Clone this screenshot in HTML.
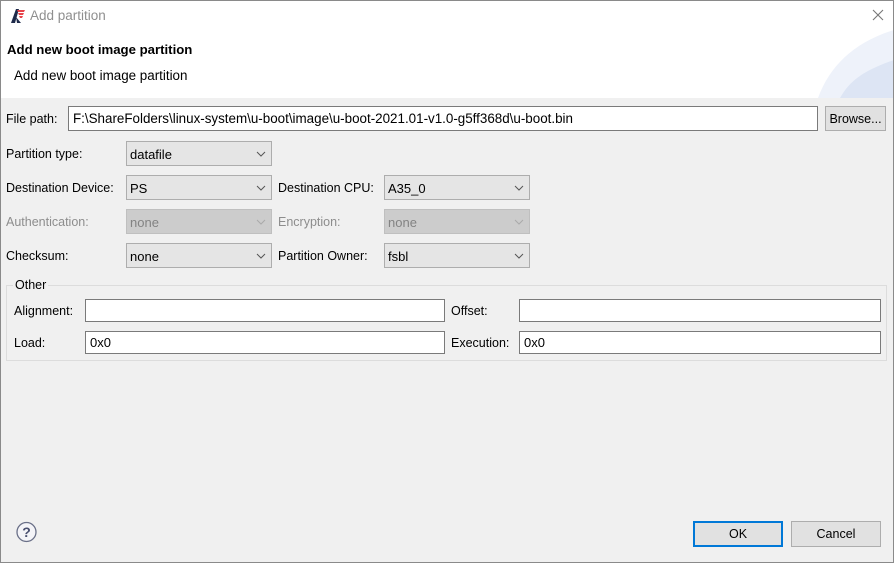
<!DOCTYPE html>
<html><head><style>
*{box-sizing:border-box;margin:0;padding:0}
body{width:894px;height:563px;overflow:hidden;background:#f0f0f0;font-family:"Liberation Sans",sans-serif;font-size:12.5px;color:#000;position:relative}
.a{position:absolute;white-space:nowrap}
.lbl{position:absolute;line-height:14px;white-space:nowrap}
.in{position:absolute;background:#fff;border:1px solid #7a7a7a;padding-left:4px;line-height:23px;white-space:nowrap;overflow:hidden;font-size:13px}
.cb{position:absolute;background:#e5e5e5;border:1px solid #adadad;padding-left:3px;height:25px;line-height:25px;font-size:13px}
.cb.d{background:#cccccc;border-color:#bfbfbf;color:#838383}
.cb svg{position:absolute;right:5px;top:9px}
.dis{color:#8d8d8d}
.btn{position:absolute;background:#e1e1e1;border:1px solid #adadad;text-align:center;line-height:24px}
</style></head><body>
<div class="a" style="left:0;top:0;width:894px;height:98px;background:#fff"></div>
<svg class="a" style="left:800px;top:30px" width="94" height="68"><path d="M18 68 C30 35 55 12 94 0 V68Z" fill="#eef2fa"/><path d="M40 68 C50 50 65 40 94 30 V68Z" fill="#dde5f4"/></svg>
<div class="a" style="left:0;top:0;width:894px;height:563px;border:1px solid #8a8a8a"></div>
<svg class="a" style="left:10px;top:8px" width="16" height="16"><path d="M1 15 L6 1 L9 1 L5 15Z" fill="#1e2a4a"/><path d="M6 9 L11 15 L7 15Z" fill="#1e2a4a"/><path d="M7 2 H15 L14 4 H8Z M8 5 H14 L13 7 H9Z M9 8 H13 L12 10 H10Z" fill="#e8434a"/></svg>
<div class="a" style="left:30px;top:8px;color:#8f8f8f;font-size:13.5px">Add partition</div>
<svg class="a" style="left:872px;top:9px" width="12" height="12"><path d="M1 1L11 11M11 1L1 11" stroke="#777" stroke-width="1.1"/></svg>
<div class="a" style="left:7px;top:42px;font-weight:bold;font-size:13.2px">Add new boot image partition</div>
<div class="a" style="left:14px;top:68px;font-size:13.4px">Add new boot image partition</div>

<div class="lbl" style="left:6px;top:112px">File path:</div>
<div class="in" style="left:68px;top:106px;width:750px;height:25px;font-size:13.4px">F:\ShareFolders\linux-system\u-boot\image\u-boot-2021.01-v1.0-g5ff368d\u-boot.bin</div>
<div class="btn" style="left:825px;top:106px;width:61px;height:25px">Browse...</div>

<div class="lbl" style="left:6px;top:147px">Partition type:</div>
<div class="cb" style="left:126px;top:141px;width:146px">datafile<svg width="10" height="6"><path d="M1 1L5 5L9 1" stroke="#555" fill="none"/></svg></div>

<div class="lbl" style="left:6px;top:181px">Destination Device:</div>
<div class="cb" style="left:126px;top:175px;width:146px">PS<svg width="10" height="6"><path d="M1 1L5 5L9 1" stroke="#555" fill="none"/></svg></div>
<div class="lbl" style="left:278px;top:181px">Destination CPU:</div>
<div class="cb" style="left:384px;top:175px;width:146px">A35_0<svg width="10" height="6"><path d="M1 1L5 5L9 1" stroke="#555" fill="none"/></svg></div>

<div class="lbl dis" style="left:6px;top:215px">Authentication:</div>
<div class="cb d" style="left:126px;top:209px;width:146px">none<svg width="10" height="6"><path d="M1 1L5 5L9 1" stroke="#aaa" fill="none"/></svg></div>
<div class="lbl dis" style="left:278px;top:215px">Encryption:</div>
<div class="cb d" style="left:384px;top:209px;width:146px">none<svg width="10" height="6"><path d="M1 1L5 5L9 1" stroke="#aaa" fill="none"/></svg></div>

<div class="lbl" style="left:6px;top:249px">Checksum:</div>
<div class="cb" style="left:126px;top:243px;width:146px">none<svg width="10" height="6"><path d="M1 1L5 5L9 1" stroke="#555" fill="none"/></svg></div>
<div class="lbl" style="left:278px;top:249px">Partition Owner:</div>
<div class="cb" style="left:384px;top:243px;width:146px">fsbl<svg width="10" height="6"><path d="M1 1L5 5L9 1" stroke="#555" fill="none"/></svg></div>

<div class="a" style="left:6px;top:285px;width:881px;height:76px;border:1px solid #dcdcdc"></div>
<div class="lbl" style="left:13px;top:278px;background:#f0f0f0;padding:0 2px">Other</div>
<div class="lbl" style="left:14px;top:304px">Alignment:</div>
<div class="in" style="left:85px;top:299px;width:360px;height:23px"></div>
<div class="lbl" style="left:451px;top:304px">Offset:</div>
<div class="in" style="left:519px;top:299px;width:362px;height:23px"></div>
<div class="lbl" style="left:14px;top:336px">Load:</div>
<div class="in" style="left:85px;top:331px;width:360px;height:23px;line-height:22px">0x0</div>
<div class="lbl" style="left:451px;top:336px">Execution:</div>
<div class="in" style="left:519px;top:331px;width:362px;height:23px;line-height:22px">0x0</div>

<svg class="a" style="left:16px;top:521px" width="21" height="22"><circle cx="10.5" cy="11" r="9.5" fill="#f4f4f8" stroke="#6a7088" stroke-width="1.3"/><text x="10.5" y="16" font-family="Liberation Sans" font-weight="bold" font-size="14" fill="#4a5070" text-anchor="middle">?</text></svg>
<div class="btn" style="left:693px;top:521px;width:90px;height:26px;border:2px solid #0078d7;line-height:23px">OK</div>
<div class="btn" style="left:791px;top:521px;width:90px;height:26px">Cancel</div>
</body></html>
